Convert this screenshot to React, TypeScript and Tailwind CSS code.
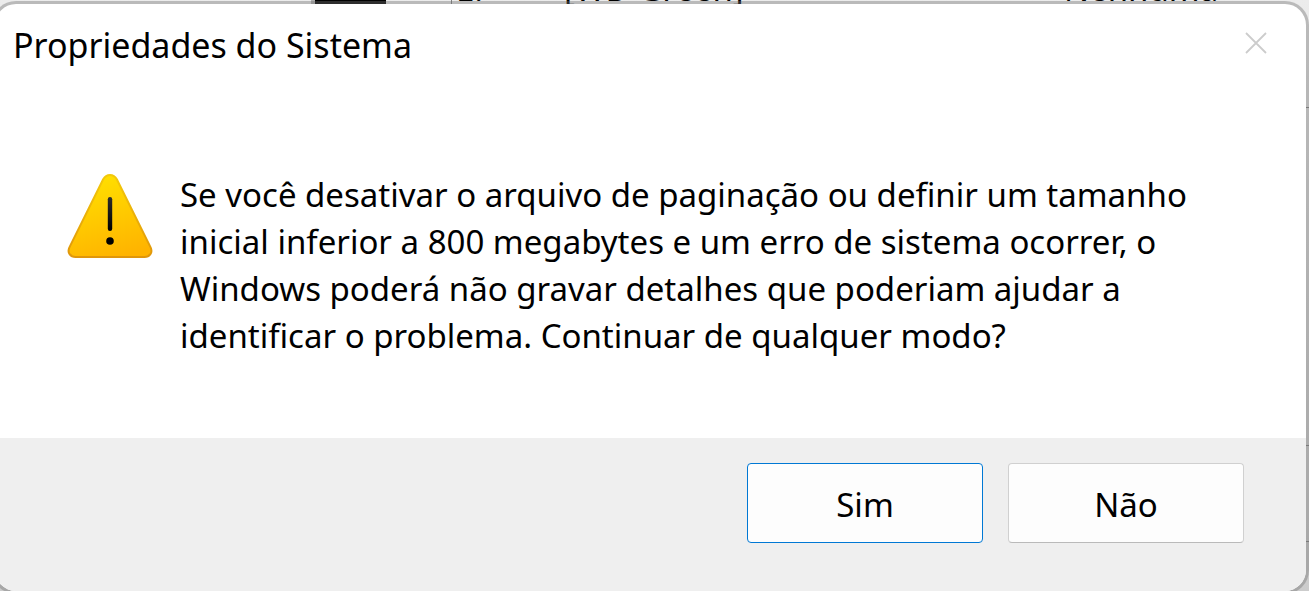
const MESSAGE = [
  'Se você desativar o arquivo de paginação ou definir um tamanho',
  'inicial inferior a 800 megabytes e um erro de sistema ocorrer, o',
  'Windows poderá não gravar detalhes que poderiam ajudar a',
  'identificar o problema. Continuar de qualquer modo?',
]

function WarningIcon() {
  return (
    <svg className="h-[86px] w-[86px] shrink-0" viewBox="0 0 86 86" aria-hidden="true">
      <defs>
        <linearGradient id="warningFill" x1="0.35" y1="0" x2="0.65" y2="1">
          <stop offset="0" stopColor="#ffe000" />
          <stop offset="1" stopColor="#ffb300" />
        </linearGradient>
        <linearGradient id="warningEdge" x1="0" y1="0" x2="0" y2="1">
          <stop offset="0" stopColor="#f3c90a" />
          <stop offset="1" stopColor="#e0960a" />
        </linearGradient>
        <linearGradient id="warningMark" x1="0" y1="0" x2="0" y2="1">
          <stop offset="0" stopColor="#2b2b2b" />
          <stop offset="1" stopColor="#000000" />
        </linearGradient>
      </defs>
      <path
        d="M36.2 6.2 Q38.6 2 43 2 Q47.4 2 49.8 6.2 L83.6 74.4 Q85.4 78.6 83.4 81.2 Q81.4 84 77.6 84 L8.4 84 Q4.6 84 2.6 81.2 Q0.6 78.6 2.4 74.4 Z"
        fill="url(#warningFill)"
        stroke="url(#warningEdge)"
        strokeWidth="2"
        strokeLinejoin="round"
      />
      <rect x="40.8" y="24" width="4.4" height="34" rx="2.2" fill="url(#warningMark)" />
      <circle cx="43" cy="68" r="3.8" fill="#000" />
    </svg>
  )
}

// Slice of the window behind the dialog, mostly hidden by it
function Backdrop() {
  return (
    <div className="absolute inset-0 overflow-hidden bg-gradient-to-b from-[#ececec] to-[#cccccc]" aria-hidden="true">
      <div className="absolute left-[311px] top-0 h-1 w-[75px] border-l-4 border-[#b0b0b0] bg-black" />
      <div className="absolute left-[451px] top-0 h-1 w-px bg-[#808080]" />
      <div className="absolute -top-[35px] left-[456px] text-[33px] leading-[48px] whitespace-nowrap">E:</div>
      <div className="absolute -top-[35px] left-[564px] text-[33px] leading-[48px] whitespace-nowrap">[WD Green]</div>
      <div className="absolute -top-[35px] left-[1064px] text-[33px] leading-[48px] whitespace-nowrap">Nenhuma</div>
      <div className="absolute right-0 top-[107px] h-px w-8 bg-[#808080]" />
      <div className="absolute right-0 top-[445px] h-px w-8 bg-[#808080]" />
      <div className="absolute right-0 top-[541px] h-px w-8 bg-[#808080]" />
    </div>
  )
}

export default function App() {
  return (
    <div className="relative flex h-screen overflow-hidden font-['Noto_Sans','Open_Sans',sans-serif] text-black">
      <Backdrop />
      <div
        role="alertdialog"
        aria-labelledby="dialog-title"
        aria-describedby="dialog-message"
        className="relative -mb-[3px] -ml-2 mt-px flex flex-1 flex-col overflow-hidden rounded-3xl border-3 border-[#707070]/40 bg-white bg-clip-padding"
      >
        <header className="flex items-start justify-between pl-[18px] pr-[39px]">
          <h1 id="dialog-title" className="pt-[17px] text-[34px] leading-[48px]">
            Propriedades do Sistema
          </h1>
          <button type="button" aria-label="Fechar" className="mt-[28px] text-[#cccccc]">
            <svg className="h-[22px] w-[22px]" viewBox="0 0 22 22" fill="none" stroke="currentColor" strokeWidth="1.8">
              <path d="M1 1 L21 21 M21 1 L1 21" />
            </svg>
          </button>
        </header>

        <main className="flex flex-1 items-start gap-[27px] pl-[72px] pt-[102px]">
          <div className="pt-0.5">
            <WarningIcon />
          </div>
          <p id="dialog-message" className="text-[33px] leading-[47px]">
            {MESSAGE.map((line) => (
              <span key={line} className="block whitespace-nowrap">
                {line}
              </span>
            ))}
          </p>
        </main>

        <footer className="flex justify-end gap-[25px] bg-[#efefef] pb-12 pr-[62px] pt-[25px]">
          <button type="button" className="h-20 w-[236px] rounded border border-[#0078d4] bg-[#fdfdfd] pt-1 text-[33px]">
            Sim
          </button>
          <button
            type="button"
            className="h-20 w-[236px] rounded border border-[#d0d0d0] border-b-[#bababa] bg-[#fdfdfd] pt-1 text-[33px]"
          >
            Não
          </button>
        </footer>
      </div>
    </div>
  )
}
